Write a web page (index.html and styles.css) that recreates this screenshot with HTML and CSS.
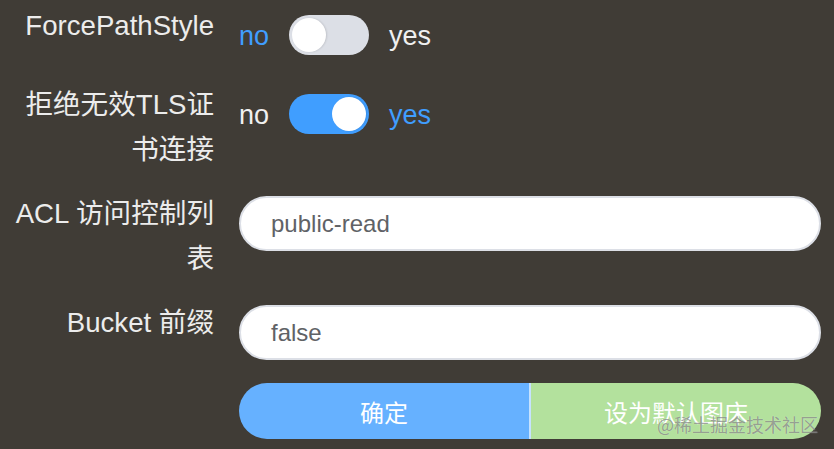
FILE: index.html
```html
<!DOCTYPE html>
<html lang="zh-CN">
<head>
<meta charset="utf-8">
<title>设置</title>
<link rel="stylesheet" href="styles.css">
</head>
<body>
<div class="page">
  <form class="form">
    <div class="row">
      <label class="label">ForcePathStyle</label>
      <div class="content">
        <div class="switch">
          <span class="sw-text active">no</span>
          <span class="track"><span class="knob"></span></span>
          <span class="sw-text">yes</span>
        </div>
      </div>
    </div>
    <div class="row">
      <label class="label">拒绝无效TLS证书连接</label>
      <div class="content">
        <div class="switch on">
          <span class="sw-text">no</span>
          <span class="track"><span class="knob"></span></span>
          <span class="sw-text active">yes</span>
        </div>
      </div>
    </div>
    <div class="row">
      <label class="label">ACL 访问控制列表</label>
      <div class="content">
        <div class="input">public-read</div>
      </div>
    </div>
    <div class="row">
      <label class="label">Bucket 前缀</label>
      <div class="content">
        <div class="input">false</div>
      </div>
    </div>
    <div class="row">
      <span class="label"></span>
      <div class="content">
        <div class="btn-group">
          <button type="button" class="btn primary">确定</button>
          <button type="button" class="btn success">设为默认图床</button>
        </div>
      </div>
    </div>
  </form>
  <div class="watermark">@稀土掘金技术社区</div>
</div>
</body>
</html>
```

FILE: styles.css
```css
html, body {
  margin: 0;
  padding: 0;
  background: #403c36;
}
body {
  width: 834px;
  height: 449px;
  overflow: hidden;
  font-family: "Liberation Sans", Arial, "Noto Sans CJK SC", sans-serif;
}
.page {
  position: relative;
  width: 834px;
  height: 449px;
}
.form {
  display: flex;
  flex-direction: column;
  gap: 19px;
  padding: 3px 13px 0 0;
}
.row {
  display: grid;
  grid-template-columns: 214px 1fr;
  column-gap: 25px;
  align-items: start;
}
.label {
  box-sizing: border-box;
  padding-left: 10px;
  text-align: right;
  font-size: 27.6px;
  line-height: 45px;
  color: #ececec;
}
.content {
  padding-top: 4px;
  min-height: 56px;
  display: flex;
  align-items: center;
}
.switch {
  display: flex;
  align-items: center;
  height: 56px;
}
.sw-text {
  font-size: 27px;
  color: #f0f0f0;
  line-height: 40px;
  padding-top: 2px;
}
.sw-text.active {
  color: #409eff;
}
.track {
  position: relative;
  width: 80px;
  height: 40px;
  border-radius: 20px;
  background: #dcdfe6;
  margin: 0 20px;
  box-sizing: border-box;
}
.knob {
  position: absolute;
  top: 3px;
  left: 3px;
  width: 34px;
  height: 34px;
  border-radius: 50%;
  background: #fff;
  box-shadow: 1px 0 2px rgba(0, 0, 0, 0.12);
}
.switch.on .track {
  background: #409eff;
}
.switch.on .knob {
  left: 43px;
}
.input {
  box-sizing: border-box;
  width: 100%;
  height: 55px;
  border-radius: 28px;
  background: #fff;
  border: 2px solid #dcdfe6;
  padding-left: 30px;
  font-size: 24px;
  line-height: 51px;
  color: #606266;
}
.btn-group {
  display: flex;
  width: 100%;
  height: 56px;
}
.btn {
  flex: 1;
  border: 0;
  margin: 0;
  height: 56px;
  font-family: "Liberation Sans", Arial, "Noto Sans CJK SC", sans-serif;
  font-size: 24px;
  color: #fff;
  cursor: pointer;
}
.btn.primary {
  background: #66b1ff;
  border-radius: 28px 0 0 28px;
  border-right: 2px solid #c6e2ff;
}
.btn.success {
  background: #b3e19d;
  border-radius: 0 28px 28px 0;
}
.watermark {
  position: absolute;
  right: 16px;
  bottom: 15px;
  font-family: "Noto Sans CJK SC", sans-serif;
  font-size: 18px;
  line-height: 20px;
  color: rgba(90, 90, 90, 0.55);
  text-shadow: 0 0 1px rgba(255, 255, 255, 0.6);
}
```
